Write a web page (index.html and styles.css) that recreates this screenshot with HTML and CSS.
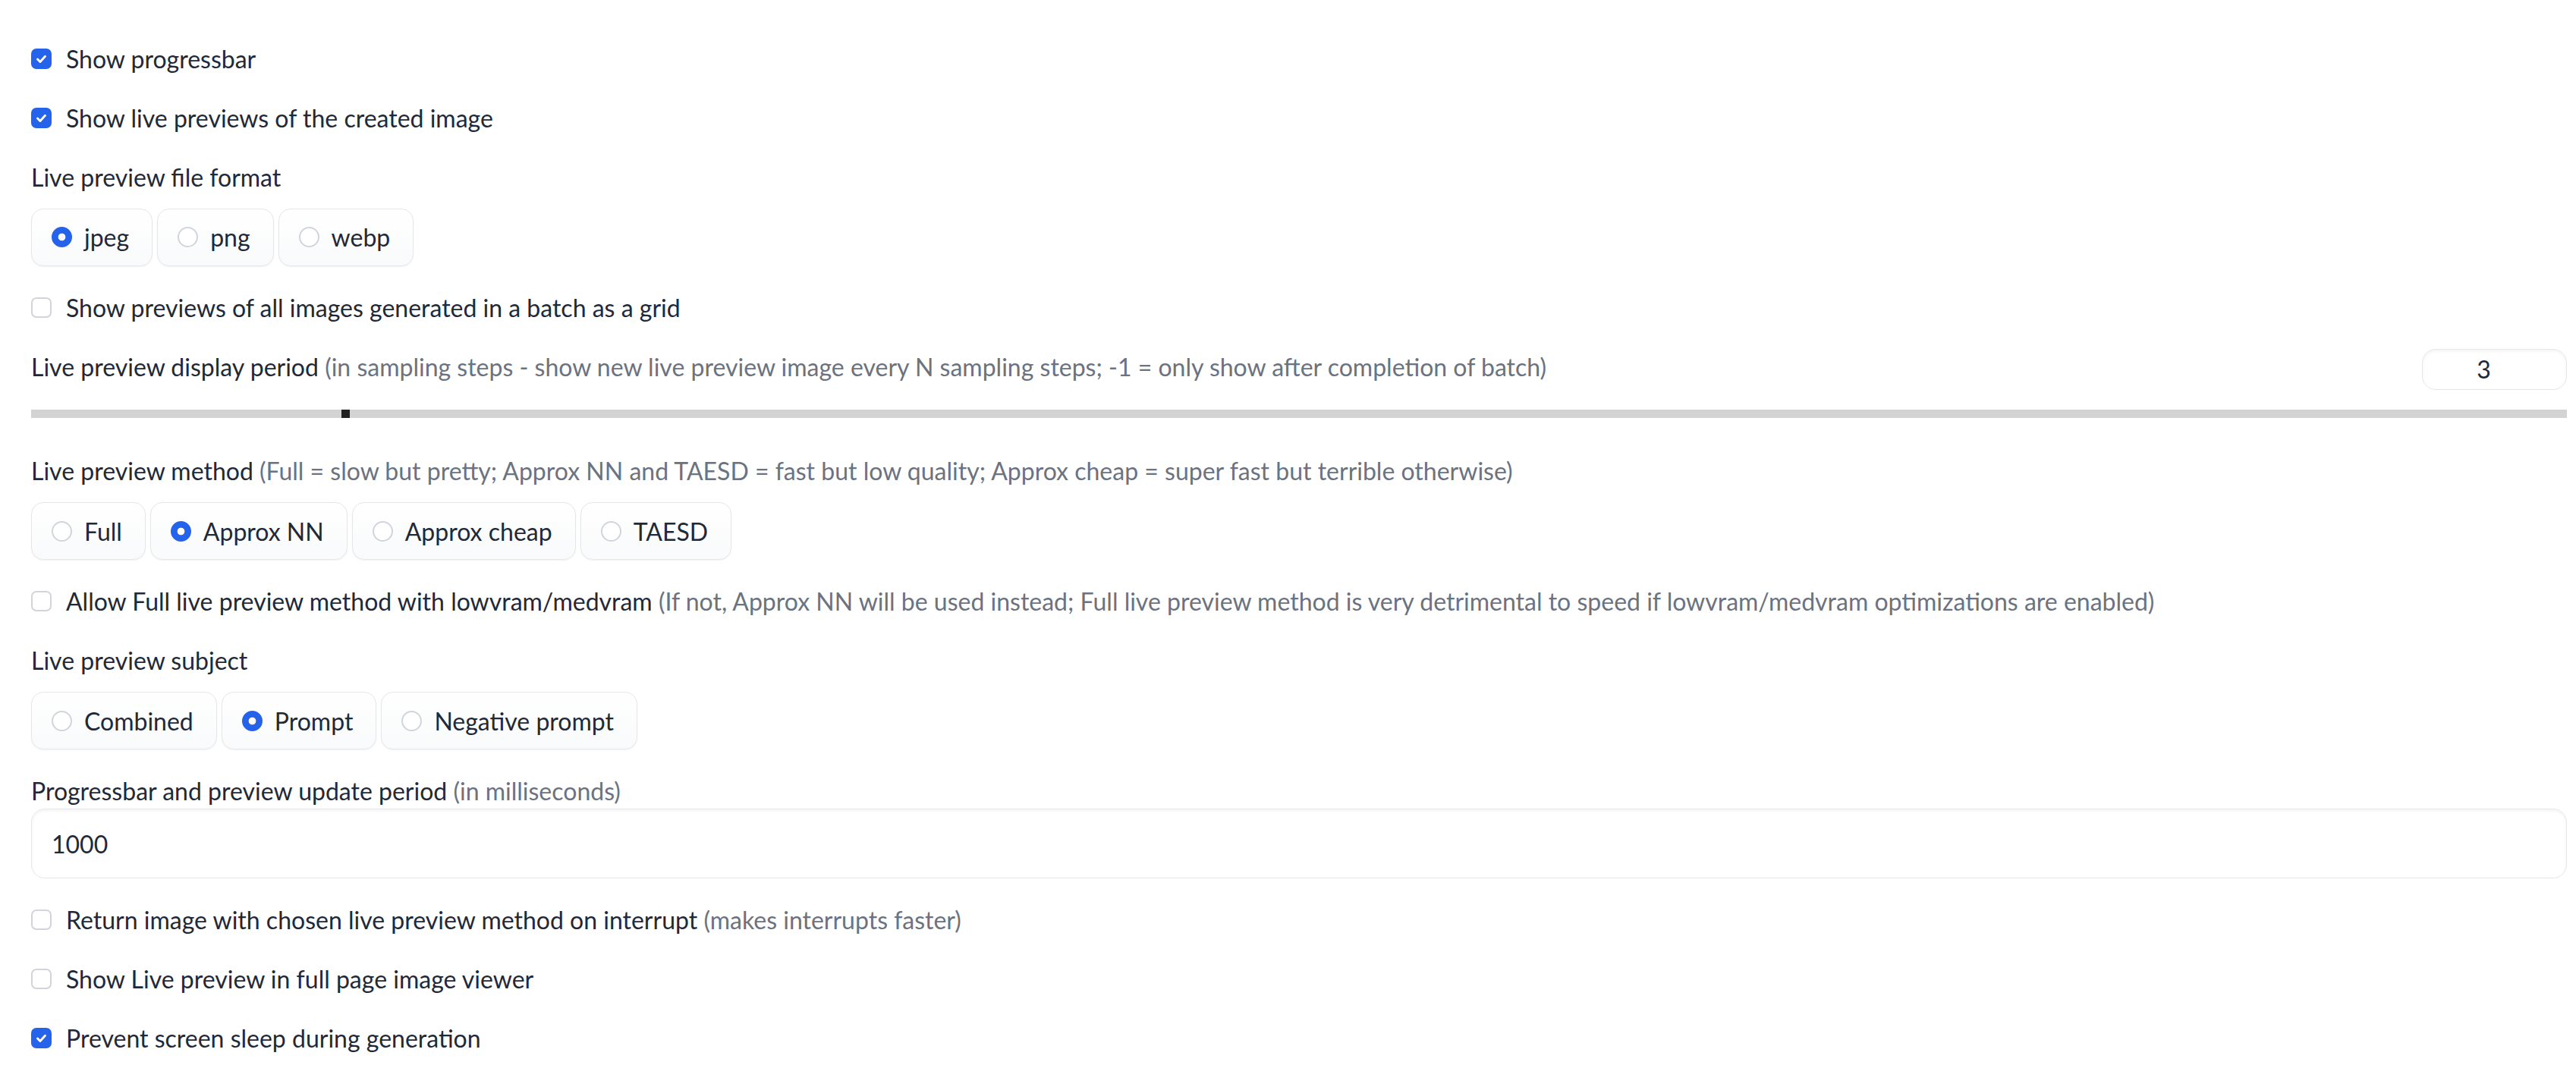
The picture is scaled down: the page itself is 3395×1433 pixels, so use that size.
FILE: index.html
```html
<!DOCTYPE html>
<html lang="en">
<head>
<meta charset="UTF-8">
<meta name="viewport" content="width=device-width, initial-scale=1.0">
<title>Live previews</title>
<link rel="stylesheet" href="styles.css">
</head>
<body>
<div class="settings">
    <div class="check-row">
        <span class="box on"><svg viewBox="0 0 16 16"><path d="M4.2 8.4l2.6 2.6 5-5.4"/></svg></span>
        <span>Show progressbar</span>
    </div>
    <div class="check-row">
        <span class="box on"><svg viewBox="0 0 16 16"><path d="M4.2 8.4l2.6 2.6 5-5.4"/></svg></span>
        <span>Show live previews of the created image</span>
    </div>
    <div class="field">
        <div class="label">Live preview file format</div>
        <div class="radios">
            <div class="radio-item"><span class="dot on"></span>jpeg</div>
            <div class="radio-item"><span class="dot"></span>png</div>
            <div class="radio-item"><span class="dot"></span>webp</div>
        </div>
    </div>
    <div class="check-row">
        <span class="box"></span>
        <span>Show previews of all images generated in a batch as a grid</span>
    </div>
    <div class="field">
        <div class="slider-head">
            <div class="label">Live preview display period <span class="hint">(in sampling steps - show new live preview image every N sampling steps; -1 = only show after completion of batch)</span></div>
            <div class="number">3</div>
        </div>
        <div class="track"><span class="thumb" style="left: 12.25%"></span></div>
    </div>
    <div class="field">
        <div class="label">Live preview method <span class="hint">(Full = slow but pretty; Approx NN and TAESD = fast but low quality; Approx cheap = super fast but terrible otherwise)</span></div>
        <div class="radios">
            <div class="radio-item"><span class="dot"></span>Full</div>
            <div class="radio-item"><span class="dot on"></span>Approx NN</div>
            <div class="radio-item"><span class="dot"></span>Approx cheap</div>
            <div class="radio-item"><span class="dot"></span>TAESD</div>
        </div>
    </div>
    <div class="check-row">
        <span class="box"></span>
        <span>Allow Full live preview method with lowvram/medvram <span class="hint">(If not, Approx NN will be used instead; Full live preview method is very detrimental to speed if lowvram/medvram optimizations are enabled)</span></span>
    </div>
    <div class="field">
        <div class="label">Live preview subject</div>
        <div class="radios">
            <div class="radio-item"><span class="dot"></span>Combined</div>
            <div class="radio-item"><span class="dot on"></span>Prompt</div>
            <div class="radio-item"><span class="dot"></span>Negative prompt</div>
        </div>
    </div>
    <div class="field">
        <div class="label tight">Progressbar and preview update period <span class="hint">(in milliseconds)</span></div>
        <div class="textbox">1000</div>
    </div>
    <div class="check-row">
        <span class="box"></span>
        <span>Return image with chosen live preview method on interrupt <span class="hint">(makes interrupts faster)</span></span>
    </div>
    <div class="check-row">
        <span class="box"></span>
        <span>Show Live preview in full page image viewer</span>
    </div>
    <div class="check-row">
        <span class="box on"><svg viewBox="0 0 16 16"><path d="M4.2 8.4l2.6 2.6 5-5.4"/></svg></span>
        <span>Prevent screen sleep during generation</span>
    </div>
</div>
</body>
</html>
```

FILE: styles.css
```css
body {
    margin: 0;
    padding: 0;
    background-color: #fff;
    font-family: Lato, "Liberation Sans", sans-serif;
    font-size: 32px;
    line-height: 47px;
    color: #1f2937;
}
.settings {
    display: flex;
    flex-direction: column;
    gap: 30.9px;
    padding: 54px 12px 40px 41px;
}
.check-row {
    display: flex;
    align-items: center;
    gap: 19px;
}
.box {
    flex: none;
    width: 27px;
    height: 27px;
    box-sizing: border-box;
    border: 2px solid #d1d5db;
    border-radius: 7px;
    background-color: #fff;
    display: flex;
    align-items: center;
    justify-content: center;
}
.box.on {
    border-color: #2563eb;
    background-color: #2563eb;
}
.box svg {
    width: 21px;
    height: 21px;
    fill: none;
    stroke: #fff;
    stroke-width: 2.2;
    stroke-linecap: round;
    stroke-linejoin: round;
}
.hint {
    color: #6b7280;
}
.label {
    margin-bottom: 18px;
}
.label.tight {
    margin-bottom: 0;
}
.radios {
    display: flex;
    gap: 6px;
}
.radio-item {
    display: flex;
    align-items: center;
    gap: 16px;
    padding: 13.5px 30px 13.5px 26px;
    border: 1px solid #e5e7eb;
    border-radius: 16px;
    background: linear-gradient(to top, #f9fafb, #fff);
    box-shadow: 0 1px 2px rgba(0, 0, 0, 0.06);
}
.dot {
    flex: none;
    width: 27px;
    height: 27px;
    box-sizing: border-box;
    border: 2px solid #d1d5db;
    border-radius: 50%;
    background-color: #fff;
}
.dot.on {
    border-color: #2563eb;
    background: radial-gradient(circle, #fff 0 4.5px, #2563eb 5.2px);
}
.slider-head {
    display: flex;
    justify-content: space-between;
    align-items: flex-start;
}
.slider-head .label {
    margin-bottom: 0;
}
.number {
    width: 191px;
    height: 54px;
    box-sizing: border-box;
    border: 1px solid #e5e7eb;
    border-radius: 18px;
    text-align: center;
    line-height: 52px;
    padding-right: 28px;
    box-shadow: inset 0 2px 4px rgba(0, 0, 0, 0.05);
}
.track {
    position: relative;
    height: 11px;
    margin: 26px 0 16px;
    background-color: #d3d3d3;
}
.thumb {
    position: absolute;
    top: 0;
    width: 11px;
    height: 11px;
    background-color: #222;
}
.textbox {
    height: 92px;
    box-sizing: border-box;
    padding: 22px 26px;
    border: 1px solid #e5e7eb;
    border-radius: 18px;
    box-shadow: inset 0 2px 4px rgba(0, 0, 0, 0.05);
}
```
